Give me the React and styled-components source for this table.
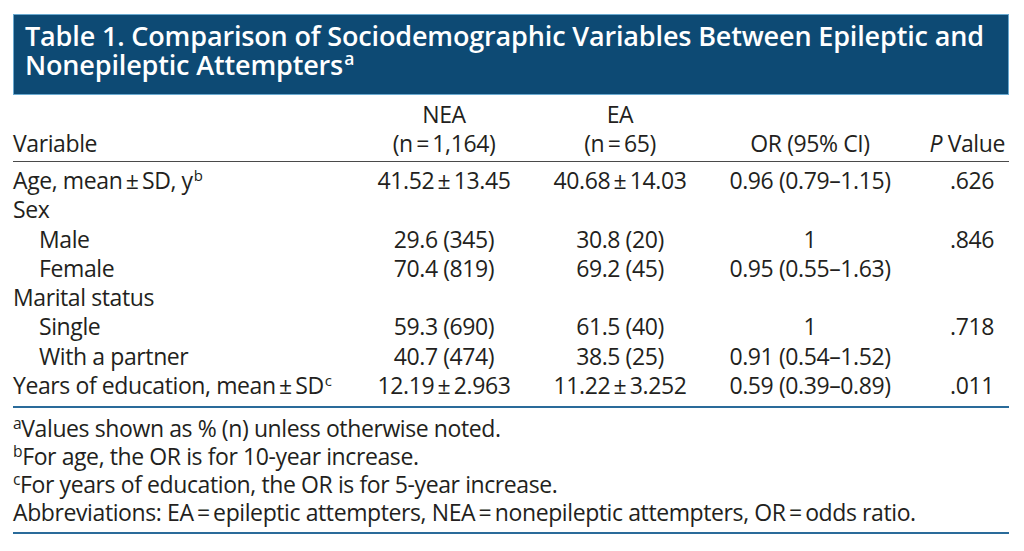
import React from "react";
import styled, { createGlobalStyle } from "styled-components";

const GlobalStyle = createGlobalStyle`
  body {
    margin: 0;
    background: #fff;
    font-family: "Open Sans", "Liberation Sans", sans-serif;
    color: #231f20;
  }
`;

const rows = [
  { label: "Age, mean", pm: true, labelTail: "SD, y", sup: "b", nea: "41.52±13.45", ea: "40.68±14.03", or: "0.96 (0.79–1.15)", p: ".626" },
  { label: "Sex" },
  { label: "Male", indent: true, nea: "29.6 (345)", ea: "30.8 (20)", or: "1", p: ".846" },
  { label: "Female", indent: true, nea: "70.4 (819)", ea: "69.2 (45)", or: "0.95 (0.55–1.63)" },
  { label: "Marital status" },
  { label: "Single", indent: true, nea: "59.3 (690)", ea: "61.5 (40)", or: "1", p: ".718" },
  { label: "With a partner", indent: true, nea: "40.7 (474)", ea: "38.5 (25)", or: "0.91 (0.54–1.52)" },
  { label: "Years of education, mean", pm: true, labelTail: "SD", sup: "c", nea: "12.19±2.963", ea: "11.22±3.252", or: "0.59 (0.39–0.89)", p: ".011" },
];

const notes = [
  { sup: "a", text: "Values shown as % (n) unless otherwise noted." },
  { sup: "b", text: "For age, the OR is for 10-year increase." },
  { sup: "c", text: "For years of education, the OR is for 5-year increase." },
  { text: "Abbreviations: EA\u2009=\u2009epileptic attempters, NEA\u2009=\u2009nonepileptic attempters, OR\u2009=\u2009odds ratio." },
];

function fmt(s) {
  // thin spaces around ± like the typeset original
  return s.replace("±", "\u2009±\u2009");
}

export default function App() {
  return (
    <Page>
      <GlobalStyle />
      <Title>
        Table 1. Comparison of Sociodemographic Variables Between Epileptic and
        <br />
        Nonepileptic Attempters<Sup>a</Sup>
      </Title>
      <Table>
        <colgroup>
          <col style={{ width: 343 }} />
          <col style={{ width: 176 }} />
          <col style={{ width: 176 }} />
          <col style={{ width: 204 }} />
          <col />
        </colgroup>
        <thead>
          <tr>
            <Head align="left">Variable</Head>
            <Head>
              NEA
              <br />
              (n{"\u2009=\u2009"}1,164)
            </Head>
            <Head>
              EA
              <br />
              (n{"\u2009=\u2009"}65)
            </Head>
            <Head>OR (95% CI)</Head>
            <Head align="right" $pad="4px">
              <I>P</I> Value
            </Head>
          </tr>
        </thead>
        <tbody>
          {rows.map((r, i) => (
            <tr key={i}>
              <Cell align="left" $indent={r.indent}>
                {r.label}
                {r.pm && (
                  <>
                    {"\u2009±\u2009"}
                    {r.labelTail}
                  </>
                )}
                {r.sup && <Sup>{r.sup}</Sup>}
              </Cell>
              <Cell>{r.nea && fmt(r.nea)}</Cell>
              <Cell>{r.ea && fmt(r.ea)}</Cell>
              <Cell>{r.or}</Cell>
              <Cell align="right" $pad="15px">{r.p}</Cell>
            </tr>
          ))}
        </tbody>
      </Table>
      <Notes>
        {notes.map((n, i) => (
          <Note key={i}>
            {n.sup && <NoteSup>{n.sup}</NoteSup>}
            {n.text}
          </Note>
        ))}
      </Notes>
    </Page>
  );
}

const Page = styled.div`
  width: 996px;
  margin: 14px 0 0 13px;
`;

const Title = styled.div`
  background: #0d4a74;
  border: 1px solid #6aa9cf;
  color: #fff;
  font-weight: 600;
  font-size: 27px;
  line-height: 29px;
  letter-spacing: -0.15px;
  padding: 6px 11px 0;
  height: 81px;
  box-sizing: border-box;
`;

const Sup = styled.sup`
  font-size: 0.65em;
  line-height: 0;
  vertical-align: 0.55em;
  margin-left: 1px;
`;

const Table = styled.table`
  width: 100%;
  border-collapse: collapse;
  table-layout: fixed;
  font-size: 23px;
  letter-spacing: -0.4px;
  margin-top: 5px;
  border-bottom: 2px solid #2a6b9a;

  tbody tr:first-child td {
    padding-top: 4px;
  }
  tbody tr:last-child td {
    padding-bottom: 6px;
  }
`;

const Head = styled.th`
  font-weight: 400;
  text-align: ${(p) => p.align || "center"};
  vertical-align: bottom;
  line-height: 29px;
  padding: 0 ${(p) => p.$pad || "0"} 3px 0;
  border-bottom: 1px solid #4a4a4a;
  white-space: nowrap;
`;

const I = styled.i`
  font-style: italic;
`;

const Cell = styled.td`
  text-align: ${(p) => p.align || "center"};
  padding: 0 ${(p) => p.$pad || "0"} 0 ${(p) => (p.$indent ? "26px" : "0")};
  line-height: 29.3px;
  white-space: nowrap;
`;

const Notes = styled.div`
  padding: 6px 0 6px;
  border-bottom: 2px solid #2a6b9a;
  font-size: 23px;
  letter-spacing: -0.4px;
`;

const Note = styled.div`
  line-height: 28px;
`;

const NoteSup = styled.sup`
  font-size: 0.68em;
  line-height: 0;
  vertical-align: 0.5em;
`;
